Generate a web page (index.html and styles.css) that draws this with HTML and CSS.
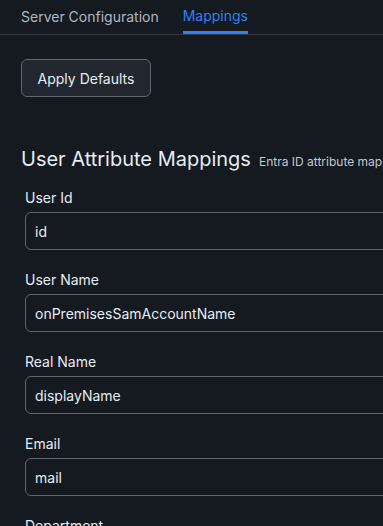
FILE: index.html
```html
<!DOCTYPE html>
<html lang="en">
<head>
    <meta charset="UTF-8">
    <meta name="viewport" content="width=device-width, initial-scale=1.0">
    <title>Mappings</title>
    <link rel="stylesheet" href="styles.css">
</head>
<body>
    <div class="tabs">
        <div class="tab">Server Configuration</div>
        <div class="tab active">Mappings</div>
    </div>
    <div class="content">
        <button class="btn">Apply Defaults</button>
        <div class="section-title">
            <h2>User Attribute Mappings</h2>
            <span class="hint">Entra ID attribute mappings for user accounts</span>
        </div>
        <div class="fields">
            <div class="field">
                <label>User Id</label>
                <input type="text" value="id">
            </div>
            <div class="field">
                <label>User Name</label>
                <input type="text" value="onPremisesSamAccountName">
            </div>
            <div class="field">
                <label>Real Name</label>
                <input type="text" value="displayName">
            </div>
            <div class="field">
                <label>Email</label>
                <input type="text" value="mail">
            </div>
            <div class="field">
                <label>Department</label>
                <input type="text" value="department">
            </div>
        </div>
    </div>
</body>
</html>
```

FILE: styles.css
```css
html, body {
    margin: 0;
    height: 100%;
    overflow: hidden;
}
body {
    background-color: #151920;
    color: #e6edf3;
    font-family: Inter, "Noto Sans", sans-serif;
    font-size: 14px;
}
.tabs {
    display: flex;
    gap: 24px;
    padding-left: 21px;
    border-bottom: 1px solid #30363d;
    height: 34px;
}
.tab {
    color: #b1b8c0;
    font-size: 14px;
    line-height: 34px;
    height: 34px;
    box-sizing: border-box;
    white-space: nowrap;
}
.tab.active {
    color: #2f81f7;
    border-bottom: 3px solid #2f81f7;
    line-height: 31px;
}
.content {
    padding: 24px 0 0 21px;
}
.btn {
    display: block;
    height: 38px;
    width: 130px;
    padding: 0;
    background-color: #22262e;
    border: 1px solid #5f6670;
    border-radius: 6px;
    color: #e6edf3;
    font-family: Inter, "Noto Sans", sans-serif;
    font-size: 14px;
}
.section-title {
    display: flex;
    align-items: baseline;
    gap: 8px;
    margin-top: 48px;
    white-space: nowrap;
}
.section-title h2 {
    margin: 0;
    font-size: 20px;
    font-weight: 400;
    line-height: 28px;
    color: #e6edf3;
}
.hint {
    font-size: 12px;
    color: #c2c8cf;
}
.fields {
    padding-left: 4px;
    margin-top: 15px;
}
.field {
    display: flex;
    flex-direction: column;
    gap: 4px;
    margin-bottom: 20px;
}
.field label {
    line-height: 20px;
    font-size: 14px;
    color: #e6edf3;
}
.field input {
    width: 420px;
    height: 38px;
    box-sizing: border-box;
    padding: 0 9px;
    background-color: #151920;
    border: 1px solid #5f6670;
    border-radius: 6px;
    color: #e6edf3;
    font-family: Inter, "Noto Sans", sans-serif;
    font-size: 14px;
}
```
